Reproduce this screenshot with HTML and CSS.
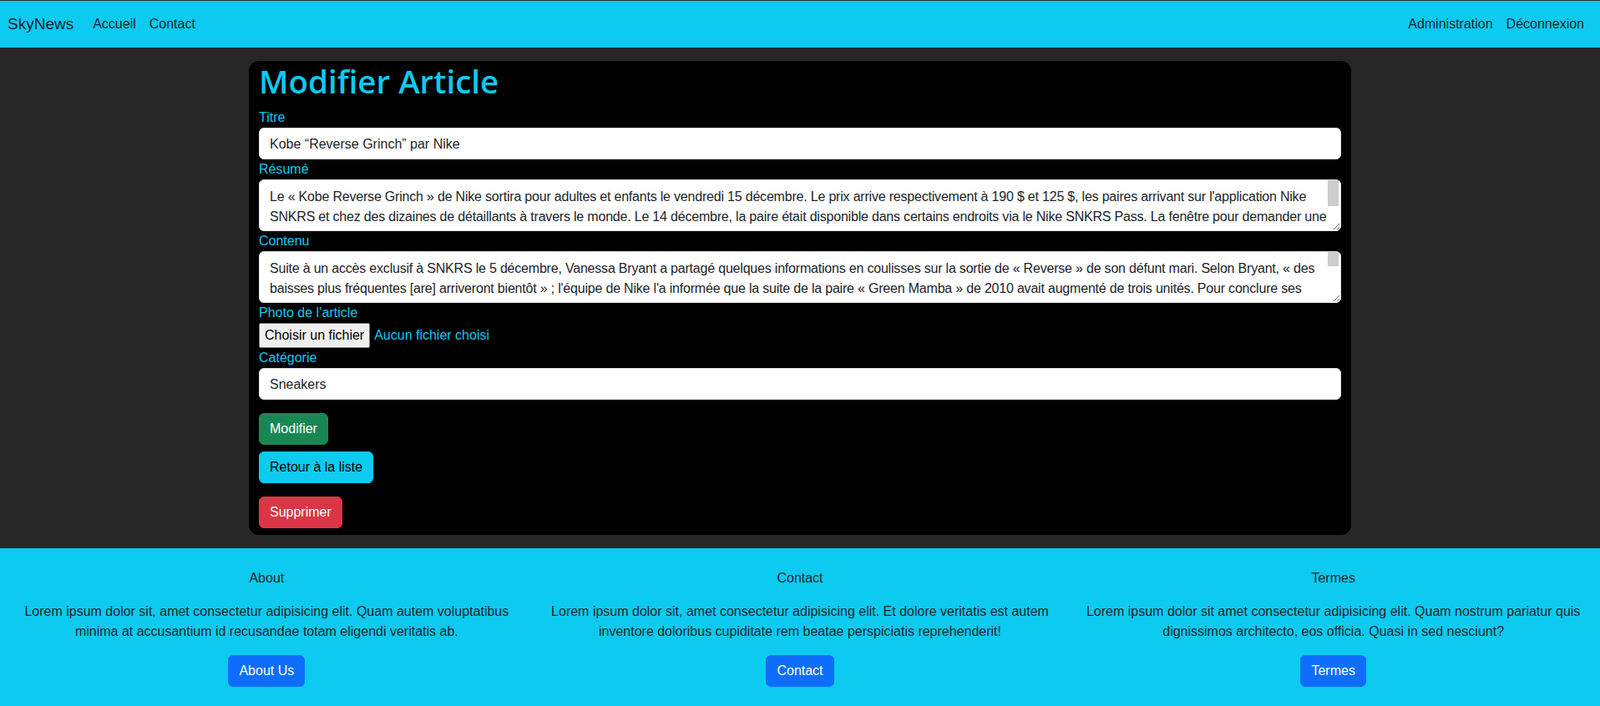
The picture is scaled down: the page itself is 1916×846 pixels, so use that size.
FILE: index.html
```html
<!DOCTYPE html>
<html lang="fr">
<head>
<meta charset="utf-8">
<title>SkyNews - Modifier Article</title>
<link rel="stylesheet" href="styles.css">
</head>
<body>
<nav class="navbar">
  <div class="nav-inner">
    <a class="brand" href="#">SkyNews</a>
    <ul class="nav-links">
      <li><a href="#">Accueil</a></li>
      <li><a href="#">Contact</a></li>
    </ul>
    <ul class="nav-links nav-right">
      <li><a href="#">Administration</a></li>
      <li><a href="#">Déconnexion</a></li>
    </ul>
  </div>
</nav>

<main class="main">
  <section class="card">
    <h1 class="card-title">Modifier Article</h1>
    <form class="edit-form">
      <label class="field-label" for="titre">Titre</label>
      <input class="field" id="titre" type="text" value="Kobe “Reverse Grinch” par Nike">

      <label class="field-label" for="resume">Résumé</label>
      <div class="area-box">
        <textarea class="field area" id="resume" rows="2">Le «&nbsp;Kobe Reverse Grinch&nbsp;» de Nike sortira pour adultes et enfants le vendredi 15 décembre. Le prix arrive respectivement à 190 $ et 125 $, les paires arrivant sur l'application Nike SNKRS et chez des dizaines de détaillants à travers le monde. Le 14 décembre, la paire était disponible dans certains endroits via le Nike SNKRS Pass. La fenêtre pour demander une réservation était ouverte de 10 h à 10 h 30, heure de l'Est, pour les utilisateurs américains, et les gagnants ont été avertis peu de temps après. Les autres pourront tenter leur chance lors du lancement général.</textarea>
        <span class="thumb thumb-resume"></span>
      </div>

      <label class="field-label" for="contenu">Contenu</label>
      <div class="area-box">
        <textarea class="field area" id="contenu" rows="2">Suite à un accès exclusif à SNKRS le 5 décembre, Vanessa Bryant a partagé quelques informations en coulisses sur la sortie de «&nbsp;Reverse&nbsp;» de son défunt mari. Selon Bryant, «&nbsp;des baisses plus fréquentes [are] arriveront bientôt&nbsp;» ; l'équipe de Nike l'a informée que la suite de la paire «&nbsp;Green Mamba&nbsp;» de 2010 avait augmenté de trois unités. Pour conclure ses propos, elle a remercié les fans pour leur patience et leur soutien indéfectible depuis le renouvellement du partenariat entre la famille Bryant et la marque au Swoosh. La «&nbsp;Kobe 6 Protro Reverse Grinch&nbsp;» reprend la silhouette emblématique portée par Kobe Bryant lors de la saison 2010-2011, avec une tige texturée évoquant des écailles de serpent. Cette fois, la couleur verte caractéristique cède la place à un rouge vif, tandis que les accents verts viennent souligner le logo et la semelle. Les amateurs de sneakers attendent cette sortie depuis de nombreux mois, et les stocks devraient s'écouler très rapidement sur toutes les plateformes. Nike a également confirmé que d'autres coloris de la gamme Protro seront dévoilés au cours de l'année prochaine.</textarea>
        <span class="thumb thumb-contenu"></span>
      </div>

      <label class="field-label">Photo de l’article</label>
      <div class="file-row">
        <button type="button" class="file-btn">Choisir un fichier</button>
        <span class="file-name">Aucun fichier choisi</span>
      </div>

      <label class="field-label" for="categorie">Catégorie</label>
      <input class="field" id="categorie" type="text" value="Sneakers">

      <div class="actions">
        <button type="button" class="btn btn-success">Modifier</button>
        <a class="btn btn-info" href="#">Retour à la liste</a>
      </div>
    </form>
    <form class="delete-form">
      <button type="button" class="btn btn-danger">Supprimer</button>
    </form>
  </section>
</main>

<footer class="footer">
  <div class="footer-col">
    <p class="footer-title">About</p>
    <p class="footer-text">Lorem ipsum dolor sit, amet consectetur adipisicing elit. Quam autem voluptatibus minima at accusantium id recusandae totam eligendi veritatis ab.</p>
    <a class="btn btn-primary" href="#">About Us</a>
  </div>
  <div class="footer-col">
    <p class="footer-title">Contact</p>
    <p class="footer-text">Lorem ipsum dolor sit, amet consectetur adipisicing elit. Et dolore veritatis est autem inventore doloribus cupiditate rem beatae perspiciatis reprehenderit!</p>
    <a class="btn btn-primary" href="#">Contact</a>
  </div>
  <div class="footer-col">
    <p class="footer-title">Termes</p>
    <p class="footer-text">Lorem ipsum dolor sit amet consectetur adipisicing elit. Quam nostrum pariatur quis dignissimos architecto, eos officia. Quasi in sed nesciunt?</p>
    <a class="btn btn-primary" href="#">Termes</a>
  </div>
</footer>
</body>
</html>
```

FILE: styles.css
```css
* { box-sizing: border-box; }

html, body {
  margin: 0;
  padding: 0;
}

body {
  background: #262626;
  border-top: 1px solid #2b2b2b;
  font-family: "Segoe UI", "Liberation Sans", Arial, sans-serif;
  font-size: 16px;
  line-height: 1.5;
  color: #212529;
}

a { text-decoration: none; }

/* Navbar */
.navbar {
  background: #0dcaf0;
  height: 56px;
}

.nav-inner {
  height: 100%;
  display: flex;
  align-items: center;
  padding: 0 11px 0 9px;
}

.brand {
  font-size: 19px;
  line-height: 30px;
  color: rgba(0, 0, 0, 0.85);
  margin-right: 15px;
}

.nav-links {
  list-style: none;
  margin: 0;
  padding: 0;
  display: flex;
}

.nav-links a {
  display: block;
  padding: 8px;
  color: rgba(0, 0, 0, 0.85);
}

.nav-right { margin-left: auto; }

/* Main */
.main {
  padding: 16px 0;
}

.card {
  width: 1320px;
  margin: 0 auto;
  background: #000;
  border-radius: 12px;
  padding: 0 12px 8px;
  color: #0dcaf0;
}

.card-title {
  margin: 0 0 8px;
  font-family: "Open Sans", "Liberation Sans", sans-serif;
  font-size: 38.5px;
  line-height: 48px;
  font-weight: 600;
  color: #0dcaf0;
}

.field-label {
  display: block;
  color: #0dcaf0;
  line-height: 24px;
}

.field {
  display: block;
  width: 100%;
  height: 38px;
  padding: 7px 12px 5px;
  font: inherit;
  line-height: 24px;
  color: #212529;
  background: #fff;
  border: 1px solid #dee2e6;
  border-radius: 6px;
  outline: none;
}

.area-box {
  position: relative;
}

.area {
  height: 62px;
  padding: 8px 12px 4px;
  letter-spacing: -0.2px;
  resize: vertical;
  overflow: hidden;
}

.thumb {
  position: absolute;
  top: 1px;
  right: 3px;
  width: 13px;
  background: #cdcdcd;
}

.thumb-resume { height: 31px; }
.thumb-contenu { height: 17px; }

.file-row {
  display: flex;
  align-items: center;
  height: 30px;
}

.file-btn {
  font: inherit;
  line-height: 22px;
  padding: 3px 6px;
  background: #efefef;
  color: #000;
  border: 1px solid #767676;
  border-radius: 2px;
}

.file-name {
  margin-left: 5px;
  color: #0dcaf0;
}

.actions {
  display: flex;
  flex-direction: column;
  align-items: flex-start;
  gap: 8px;
  margin-top: 16px;
}

.delete-form {
  margin-top: 16px;
}

.btn {
  display: inline-block;
  font: inherit;
  line-height: 24px;
  padding: 6px 12px;
  border: 1px solid transparent;
  border-radius: 6px;
  cursor: pointer;
}

.btn-success { background: #198754; border-color: #198754; color: #fff; }
.btn-info { background: #0dcaf0; border-color: #0dcaf0; color: #000; }
.btn-danger { background: #dc3545; border-color: #dc3545; color: #fff; }
.btn-primary { background: #0d6efd; border-color: #0d6efd; color: #fff; }

/* Footer */
.footer {
  background: #0dcaf0;
  display: grid;
  grid-template-columns: repeat(3, 1fr);
  padding: 24px 0 24px;
  text-align: center;
}

.footer-col {
  padding: 0 12px;
}

.footer-title,
.footer-text {
  margin: 0 0 16px;
  color: #212529;
}
```
